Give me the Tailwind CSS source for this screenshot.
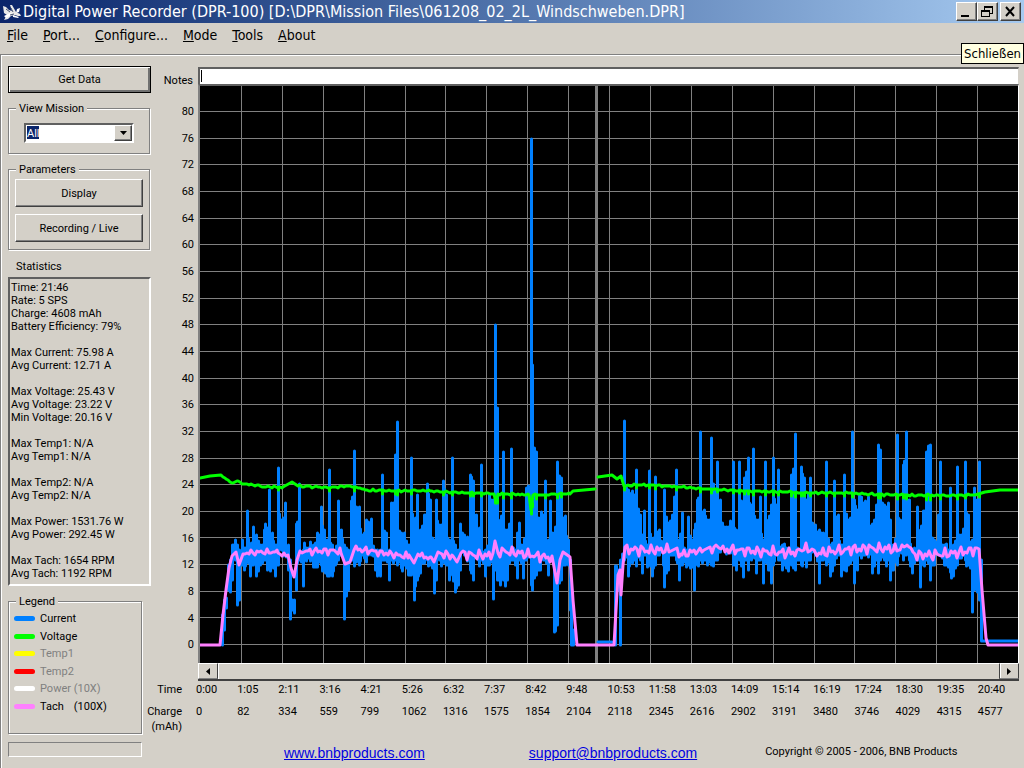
<!DOCTYPE html>
<html lang="en">
  <head>
    <meta charset="UTF-8" />
    <meta name="viewport" content="width=device-width, initial-scale=1.0" />
    <title>Digital Power Recorder (DPR-100)</title>
    <script src="https://cdn.jsdelivr.net/npm/@tailwindcss/browser@4"></script>
  </head>
  <body class="flex min-h-screen flex-col bg-[#d4d0c8] font-[Roboto,'Liberation_Sans',sans-serif] text-[11px] leading-[13px] text-black">
    <header class="relative">
      <div class="flex h-[23px] items-center bg-linear-to-r from-[#0a246a] to-[#a6caf0] pr-[3px] pl-[3px]">
        <svg class="h-[18px] w-[18px] shrink-0" viewBox="0 0 18 18">
          <path d="M0 3l3 1 3 3 3 1-2-6 2 0 4 7 4 2 1 2-3 0-3-1-4 1-3 3-4 1 3-5-3-2z" fill="#e8e8e8" />
          <path d="M1 13l6-3 3 1-7 4z M14 6l3-1-1 4-3 1z M10 12l6 2-1 1-5-1z" fill="#fff" />
          <path d="M3 6l4 3 M8 5l2 4 M7 12l4-1" stroke="#44506e" fill="none" />
        </svg>
        <h1 class="ml-[2px] flex-1 truncate font-['DejaVu_Sans_Condensed','DejaVu_Sans',sans-serif] text-[16px] leading-[22px] text-white">Digital Power Recorder (DPR-100) [D:\DPR\Mission Files\061208_02_2L_Windschweben.DPR]</h1>
        <div class="flex">
          <button type="button" aria-label="Minimize" class="h-[19px] w-[21px] border border-t-white border-r-[#404040] border-b-[#404040] border-l-white bg-[#d4d0c8] shadow-[inset_-1px_-1px_0_#808080]">
            <svg class="h-[17px] w-[19px]" viewBox="0 0 19 17"><path d="M4 12h8v2H4z" /></svg>
          </button>
          <button type="button" aria-label="Restore" class="h-[19px] w-[21px] border border-t-white border-r-[#404040] border-b-[#404040] border-l-white bg-[#d4d0c8] shadow-[inset_-1px_-1px_0_#808080]">
            <svg class="h-[17px] w-[19px]" viewBox="0 0 19 17" fill="none" stroke="#000" shape-rendering="crispEdges">
              <path d="M6.500 7V3.500h8V10H12M6 4h9M3.500 7.500h8v6h-8zM3 8h9" />
            </svg>
          </button>
          <button type="button" aria-label="Close" aria-describedby="tip" class="ml-[2px] h-[19px] w-[21px] border border-t-white border-r-[#404040] border-b-[#404040] border-l-white bg-[#d4d0c8] shadow-[inset_-1px_-1px_0_#808080]">
            <svg class="h-[17px] w-[19px]" viewBox="0 0 19 17" stroke="#000" stroke-width="2"><path d="M5 4l8 9M13 4l-8 9" /></svg>
          </button>
        </div>
      </div>
      <nav class="flex h-[31px] gap-[15px] pt-[2px] pl-[7px] font-['DejaVu_Sans_Condensed','DejaVu_Sans',sans-serif] text-[14px] leading-5">
        <button type="button" class="self-start"><u>F</u>ile</button>
        <button type="button" class="self-start"><u>P</u>ort...</button>
        <button type="button" class="self-start"><u>C</u>onfigure...</button>
        <button type="button" class="self-start"><u>M</u>ode</button>
        <button type="button" class="self-start"><u>T</u>ools</button>
        <button type="button" class="self-start"><u>A</u>bout</button>
      </nav>
      <div id="tip" role="tooltip" class="absolute top-[43px] right-0 border border-black bg-[#ffffe1] px-[2px] font-['DejaVu_Sans_Condensed','DejaVu_Sans',sans-serif] text-[13px] leading-[19px]">Schließen</div>
    </header>

    <main class="flex flex-1 border-t border-l border-[#808080] pt-[11px] pr-[5px] pl-[7px] shadow-[inset_1px_1px_0_#fff]">
      <aside class="w-[143px] shrink-0">
        <button type="button" class="block h-[27px] w-full border border-black shadow-[inset_1px_1px_0_#fff,inset_-2px_-2px_0_#707070]">Get Data</button>

        <fieldset class="mt-[9px] mr-px border border-[#808080] px-[15px] pb-[10px] shadow-[inset_1px_1px_0_#fff,1px_1px_0_#fff]">
          <legend class="-ml-[8px] bg-[#d4d0c8] px-[3px]"><label for="mission">View Mission</label></legend>
          <div class="relative mt-[8px] w-[110px]">
            <select id="mission" class="block h-[20px] w-full appearance-none border-2 border-t-[#606060] border-r-white border-b-white border-l-[#606060] bg-white bg-[linear-gradient(#0a246a,#0a246a)] bg-[length:12px_13px] bg-[position:1px_1px] bg-no-repeat pl-[1px] text-[11px] leading-[15px] text-white outline-0">
              <option>All</option>
            </select>
            <span class="pointer-events-none absolute top-[2px] right-[2px] flex h-[16px] w-[18px] items-center justify-center border border-t-white border-r-[#404040] border-b-[#404040] border-l-white bg-[#d4d0c8] shadow-[inset_-1px_-1px_0_#808080]">
              <svg class="h-[4px] w-[7px]" viewBox="0 0 7 4"><path d="M0 0h7L3.500 4z" /></svg>
            </span>
          </div>
        </fieldset>

        <fieldset class="mt-[9px] mr-px border border-[#808080] px-[6px] pb-[7px] shadow-[inset_1px_1px_0_#fff,1px_1px_0_#fff]">
          <legend class="ml-[1px] bg-[#d4d0c8] px-[3px]">Parameters</legend>
          <div class="mt-[3px] flex flex-col gap-[7px]">
            <button type="button" class="h-[28px] border border-t-white border-r-[#404040] border-b-[#404040] border-l-white shadow-[inset_-1px_-1px_0_#808080]">Display</button>
            <button type="button" class="h-[28px] border border-t-white border-r-[#404040] border-b-[#404040] border-l-white shadow-[inset_-1px_-1px_0_#808080]">Recording / Live</button>
          </div>
        </fieldset>

        <h2 class="mt-[10px] pl-[8px]">Statistics</h2>
        <div class="mt-[4px] border-2 border-t-[#606060] border-r-white border-b-white border-l-[#606060] pt-[2px] pb-[4px] pl-[1px] whitespace-nowrap">
          <p>Time: 21:46</p>
          <p>Rate: 5 SPS</p>
          <p>Charge: 4608 mAh</p>
          <p>Battery Efficiency: 79%</p>
          <p class="mt-[13px]">Max Current: 75.98 A</p>
          <p>Avg Current: 12.71 A</p>
          <p class="mt-[13px]">Max Voltage: 25.43 V</p>
          <p>Avg Voltage: 23.22 V</p>
          <p>Min Voltage: 20.16 V</p>
          <p class="mt-[13px]">Max Temp1: N/A</p>
          <p>Avg Temp1: N/A</p>
          <p class="mt-[13px]">Max Temp2: N/A</p>
          <p>Avg Temp2: N/A</p>
          <p class="mt-[13px]">Max Power: 1531.76 W</p>
          <p>Avg Power: 292.45 W</p>
          <p class="mt-[13px]">Max Tach: 1654 RPM</p>
          <p>Avg Tach: 1192 RPM</p>
        </div>

        <fieldset class="mt-[9px] mr-[9px] border border-[#808080] pb-[18px] pl-[5px] shadow-[inset_1px_1px_0_#fff,1px_1px_0_#fff]">
          <legend class="ml-[2px] bg-[#d4d0c8] px-[3px]">Legend</legend>
          <ul class="mt-[2px] grid h-[105px] grid-rows-6">
            <li class="flex items-center gap-[5px]"><i class="h-[5px] w-[21px] rounded-full bg-[#0080ff]"></i>Current</li>
            <li class="flex items-center gap-[5px]"><i class="h-[5px] w-[21px] rounded-full bg-[#00ff00]"></i>Voltage</li>
            <li class="flex items-center gap-[5px] text-[#808080]"><i class="h-[5px] w-[21px] rounded-full bg-[#ffff00]"></i>Temp1</li>
            <li class="flex items-center gap-[5px] text-[#808080]"><i class="h-[5px] w-[21px] rounded-full bg-[#ff0000]"></i>Temp2</li>
            <li class="flex items-center gap-[5px] text-[#808080]"><i class="h-[5px] w-[21px] rounded-full bg-white"></i>Power (10X)</li>
            <li class="flex items-center gap-[5px]"><i class="h-[5px] w-[21px] rounded-full bg-[#ff80ff]"></i>Tach<span class="ml-[5px]">(100X)</span></li>
          </ul>
        </fieldset>
        <div class="mt-[8px] mr-[9px] h-[15px] border border-t-[#808080] border-r-white border-b-white border-l-[#808080]"></div>
      </aside>

      <section class="flex min-w-0 flex-1 flex-col">
        <div class="grid grid-cols-[47px_1fr]">
          <label for="notes" class="h-[17px] pt-[8px] pr-[5px] text-right">Notes</label>
          <!-- the caret is painted as a background so that it shows without focus -->
          <input id="notes" type="text" class="mt-px h-[17px] min-w-0 border-t-2 border-r border-l-2 border-t-[#606060] border-r-[#d4d0c8] border-l-[#606060] bg-white bg-[linear-gradient(#000,#000)] bg-[length:1px_12px] bg-[position:1px_1px] bg-no-repeat pl-px outline-0 focus:bg-none" />

          <div id="scale" class="flex flex-col pt-[14px] pr-[4px] pb-[5px] text-right"></div>
          <div class="border-t-2 border-r border-l-2 border-t-[#606060] border-r-white border-l-[#808080] bg-black">
            <svg id="chart" class="block h-auto w-full" viewBox="200 86 818 577" fill="none" stroke-linejoin="round" stroke-linecap="round">
              <path id="grid" stroke="#808080" shape-rendering="crispEdges" />
              <path d="M596.500 86v577" stroke="#808080" stroke-width="3" shape-rendering="crispEdges" />
              <path id="current" stroke="#0080ff" stroke-width="3" />
              <path id="voltage" stroke="#00ff00" stroke-width="3" />
              <path id="tach" stroke="#ff80ff" stroke-width="3" />
            </svg>
          </div>

          <div class="col-start-2 flex h-[18px] border-b-2 border-[#404040]">
            <button type="button" aria-label="Scroll left" class="flex w-[20px] items-center justify-center border border-t-white border-r-[#404040] border-b-[#808080] border-l-white">
              <svg class="h-[7px] w-[4px]" viewBox="0 0 4 7"><path d="M4 0v7L0 3.500z" /></svg>
            </button>
            <div class="flex-1 border-t border-l border-white"></div>
            <button type="button" aria-label="Scroll right" class="flex w-[20px] items-center justify-center border border-t-white border-r-[#404040] border-b-[#808080] border-l-[#404040] shadow-[inset_1px_0_0_#fff]">
              <svg class="h-[7px] w-[4px]" viewBox="0 0 4 7"><path d="M0 0v7L4 3.500z" /></svg>
            </button>
          </div>
        </div>

        <div class="mt-[2px] grid grid-cols-[45px_1fr]">
          <div class="pr-[14px] text-right">Time</div>
          <div id="times" class="grid grid-cols-20 whitespace-nowrap"></div>
        </div>
        <div class="mt-[9px] grid grid-cols-[45px_1fr]">
          <div class="flex flex-col items-end gap-[2px] pr-[14px]"><span>Charge</span><span>(mAh)</span></div>
          <div id="charges" class="grid grid-cols-20 whitespace-nowrap"></div>
        </div>

        <footer class="mt-[10px] flex items-center pl-[133px] font-['Liberation_Sans',sans-serif] whitespace-nowrap">
          <a href="http://www.bnbproducts.com" class="text-[14px] leading-5 text-[#0000e0] underline">www.bnbproducts.com</a>
          <a href="mailto:support@bnbproducts.com" class="ml-[104px] text-[14px] leading-5 text-[#0000e0] underline">support@bnbproducts.com</a>
          <p class="ml-[68px] pb-[3px] font-[Roboto,'Liberation_Sans',sans-serif]">Copyright © 2005 - 2006, BNB Products</p>
        </footer>
      </section>
    </main>

    <script>
      var times = '0:00 1:05 2:11 3:16 4:21 5:26 6:32 7:37 8:42 9:48 10:53 11:58 13:03 14:09 15:14 16:19 17:24 18:30 19:35 20:40'
      var charges = '0 82 334 559 799 1062 1316 1575 1854 2104 2118 2345 2616 2902 3191 3480 3746 4029 4315 4577'

      // current: x, highest, lowest
      var current = [
        [222,615,645],[224,600,630],[228,565,590],[230,560,592],[232,545,580],[235,540,560],[237,545,605],[239,550,600],[242,540,565],[244,548,570],[247,511,560],[250,545,576],[253,527,565],[256,535,576],[260,545,565],[264,530,560],
        [267,528,570],[269,490,568],[272,533,565],[275,545,576],[278,468,565],[281,520,550],[285,503,550],[288,545,570],[290,560,619],[294,600,613],[296,524,590],[299,484,560],[303,550,586],[304,543,555],[308,548,558],[313,545,567],
        [317,533,567],[321,507,565],[324,530,570],[327,540,576],[329,470,576],[332,545,576],[335,550,565],[338,501,560],[341,530,555],[344,545,619],[348,550,590],[351,501,560],[354,451,566],[359,507,565],[362,535,555],[366,520,562],
        [371,519,555],[375,550,570],[380,550,576],[382,475,560],[386,533,560],[389,550,580],[391,503,560],[395,455,560],[397,422,565],[401,533,568],[404,533,565],[408,545,575],[411,458,575],[414,520,600],[417,495,580],[420,530,573],
        [424,515,563],[427,484,560],[430,500,565],[434,540,593],[436,500,580],[439,525,560],[443,481,560],[446,495,565],[449,540,580],[452,458,575],[455,545,592],[458,550,585],[460,524,570],[464,535,555],[470,475,570],[473,481,580],
        [476,515,555],[478,530,560],[481,465,560],[485,550,576],[489,495,565],[493,500,599],[495,325,570],[497,408,580],[500,520,585],[503,452,580],[507,530,580],[511,449,560],[515,550,565],[517,533,578],[519,523,560],[523,545,578],
        [526,488,560],[531,139,585],[532,365,590],[536,452,575],[540,518,570],[543,515,560],[545,481,560],[548,540,575],[550,501,560],[554,533,632],[557,462,625],[561,478,580],[565,516,565],[568,540,565],[570,560,610],[571,590,645],[573,630,645],
        [615,566,645],[618,570,590],[620,560,645],[624,421,560],[628,490,576],[631,493,560],[634,495,560],[636,470,566],[640,515,560],[642,535,573],[644,511,555],[647,545,567],[649,471,560],[652,540,576],[655,477,565],[659,530,555],
        [663,545,565],[664,490,587],[668,523,570],[672,515,555],[674,497,555],[676,470,560],[679,540,580],[682,513,565],[686,550,567],[688,517,565],[692,540,567],[694,530,590],[697,500,565],[700,432,560],[704,510,560],[707,520,565],
        [711,438,565],[715,490,560],[717,462,560],[720,500,552],[724,527,548],[728,527,550],[733,462,565],[736,530,570],[739,462,560],[743,505,577],[744,478,560],[748,458,570],[751,505,560],[753,449,555],[756,520,573],[760,497,560],
        [763,540,583],[765,462,560],[768,520,570],[771,505,583],[773,458,565],[776,505,555],[778,470,560],[782,545,570],[786,548,568],[791,475,565],[795,434,570],[799,550,560],[801,467,565],[804,478,560],[806,500,567],[810,478,560],
        [815,525,555],[819,530,583],[821,533,560],[826,462,565],[830,545,576],[834,481,565],[838,515,555],[841,545,576],[844,475,570],[848,520,565],[852,432,560],[854,500,583],[857,510,570],[859,496,555],[863,503,555],[868,497,557],
        [872,524,573],[876,505,560],[878,445,573],[880,450,560],[884,505,560],[888,503,560],[890,520,580],[893,545,570],[897,435,565],[900,520,550],[903,465,560],[906,432,555],[909,500,560],[912,550,573],[917,507,560],[920,530,587],
        [923,511,565],[926,452,560],[930,445,580],[934,540,565],[938,515,555],[940,462,555],[944,545,565],[948,550,567],[950,488,572],[953,545,576],[957,467,565],[961,535,558],[965,462,560],[968,515,565],[972,540,612],[974,488,590],
        [977,500,592],[979,462,600],[981,560,641]
      ]

      // x, y, ripple up to the next point
      var voltage = [
        [[200,478,0],[210,476,0],[221,475,1],[226,479,1],[233,483,1],[238,481,1],[243,484,1],[260,486,1],[283,487,0],[292,482,0],[298,486,1],[330,488,1],[350,486,1],[365,490,1],[397,491,1],[430,491,1],[470,493,1],[494,494,0],[496,503,0],[498,494,1],[529,495,0],[531,510,0],[533,495,1],[545,495,1],[570,494,0],[573,491,0],[595,489,0]],
        [[598,477,0],[612,475,0],[617,479,0],[621,476,0],[624,486,1],[640,485,1],[700,488,1],[750,491,1],[800,493,1],[850,493,1],[900,495,1],[950,496,1],[975,495,0],[985,492,0],[1000,490,0],[1018,490,0]]
      ]
      var tach = [
        [[200,645,0],[220,645,0],[223,615,0],[226,590,0],[229,568,0],[232,556,0],[236,552,0],[239,565,0],[243,554,3],[278,553,3],[288,555,0],[291,568,0],[294,577,0],[297,560,0],[300,551,4],[341,553,0],[345,564,0],[350,562,0],[354,550,4],[409,555,0],[414,563,0],[418,554,4],[431,557,0],[434,562,0],[438,552,5],[453,556,0],[457,562,0],[461,553,6],[493,553,0],[495,541,0],[498,553,6],[552,556,0],[557,583,0],[560,560,0],[563,552,0],[570,557,0],[573,600,0],[577,645,0],[614,645,0],[616,610,0],[618,575,0],[620,570,0],[621,595,0],[623,565,0],[625,547,6],[675,549,5],[682,555,5],[700,548,5],[717,546,4],[725,552,6],[800,550,6],[815,552,6],[900,550,6],[907,545,6],[915,554,6],[979,549,0],[982,590,0],[986,638,0],[988,645,0],[1018,645,0]]
      ]

      function trace(lines, step) {
        return lines
          .map(function (line) {
            var d = ''
            line.forEach(function (p, i) {
              d += (i ? 'L' : 'M') + p[0] + ' ' + p[1]
              var next = line[i + 1]
              if (!next || !p[2]) return
              for (var x = p[0] + step; x < next[0]; x += step) {
                var y = p[1] + ((next[1] - p[1]) * (x - p[0])) / (next[0] - p[0])
                y += p[2] * (Math.sin(x * 1.9) * 0.5 + Math.sin(x * 0.77) * 0.5 + Math.sin(x * 3.1) * 0.4)
                d += 'L' + x + ' ' + Math.round(y)
              }
            })
            return d
          })
          .join('')
      }

      function level(line, x) {
        for (var i = 1; i < line.length; i++) {
          var a = line[i - 1], b = line[i]
          if (x <= b[0]) return a[1] + ((b[1] - a[1]) * (x - a[0])) / (b[0] - a[0])
        }
      }

      function bars(rows) {
        return rows
          .map(function (r, i) {
            var x = r[0] + 0.5
            var d = 'M' + x + ' ' + r[1] + 'V' + r[2]
            var next = rows[i + 1]
            if (next && next[0] - r[0] > 2 && next[0] - r[0] < 20) {
              // the band both neighbours cover, with a ragged edge
              var top = Math.max(r[1], next[1]) + ((i * 7) % 5) * 2 - 6
              var low = Math.min(r[2], next[2]) + ((i * 3) % 4) * 3 - 3
              d += 'M' + (Math.floor((r[0] + next[0]) / 2) + 0.5) + ' ' + top + 'V' + Math.max(low, top + 10)
            }
            return d
          })
          .join('')
      }

      // the voltage sags under each current peak
      function sags() {
        return current
          .filter((r) => r[1] < 482)
          .map(function (r) {
            var y = Math.round(level(voltage[r[0] < 597 ? 0 : 1], r[0]))
            return 'M' + (r[0] + 0.5) + ' ' + y + 'v' + (r[1] < 455 ? 4 : 3)
          })
          .join('')
      }

      var lines = ''
      for (var i = 1; i < 20; i++) lines += 'M' + (200.5 + Math.round(i * 40.9)) + ' 86v577'
      for (var v = 0; v <= 80; v += 4) lines += 'M200 ' + (Math.round(645 - v * 6.66) - 0.5) + 'h818'

      document.getElementById('grid').setAttribute('d', lines)
      document.getElementById('current').setAttribute('d', bars(current) + 'M598 642H612M982 641H1018')
      document.getElementById('voltage').setAttribute('d', trace(voltage, 2) + sags())
      document.getElementById('tach').setAttribute('d', trace(tach, 2))

      for (var n = 80; n >= 0; n -= 4) {
        document.getElementById('scale').innerHTML += `<span class="flex flex-1 items-center justify-end">${n}</span>`
      }
      function fill(id, list) {
        document.getElementById(id).innerHTML = list.split(' ').map((t) => `<span>${t}</span>`).join('')
      }
      fill('times', times)
      fill('charges', charges)
    </script>
  </body>
</html>
